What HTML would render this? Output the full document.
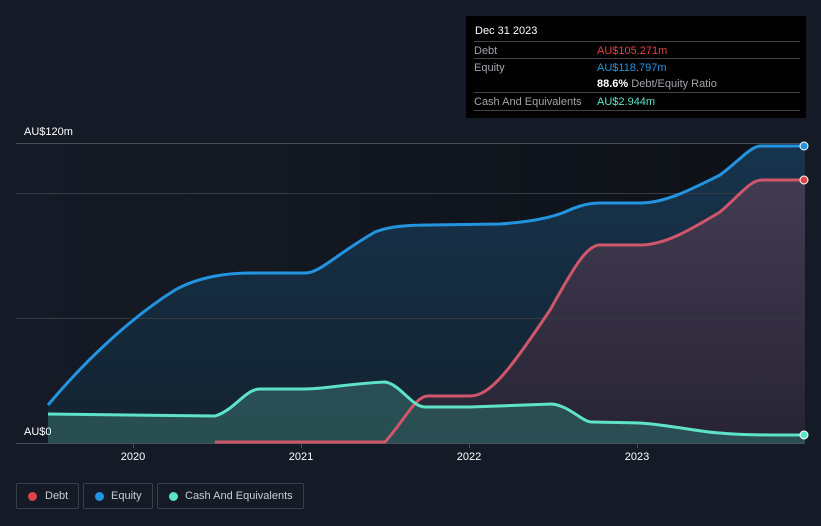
<!DOCTYPE html>
<html><head><meta charset="utf-8"><style>
body{margin:0;width:821px;height:526px;overflow:hidden;background:#151b26;font-family:"Liberation Sans",sans-serif;}
.tt{position:absolute;left:466px;top:16px;width:340px;height:102px;background:#000;color:#fff;font-size:11px;}
.tt .r{position:absolute;left:8px;width:326px;border-top:1px solid #444;height:17px;}
.tt span{position:absolute;top:3px;}
.lg{position:absolute;top:483px;height:26px;border:1px solid #3a3f48;border-radius:2px;color:#c9ccd1;font-size:11px;box-sizing:border-box;}
.lg i{position:absolute;left:11px;top:8px;width:9px;height:9px;border-radius:50%;}
.lg b{font-weight:normal;position:absolute;left:28px;top:6px;white-space:nowrap;}
</style></head><body>
<svg width="821" height="526" style="position:absolute;left:0;top:0">
<defs>
<linearGradient id="bg" x1="0" x2="1" y1="0" y2="0"><stop offset="0" stop-color="#151b26"/><stop offset="1" stop-color="#0e1117"/></linearGradient>
<linearGradient id="eq" x1="0" x2="0" y1="0" y2="1"><stop offset="0" stop-color="#16344d"/><stop offset="1" stop-color="#14222f"/></linearGradient>
<linearGradient id="db" x1="0" x2="0" y1="0" y2="1"><stop offset="0" stop-color="#433b52"/><stop offset="1" stop-color="#262433"/></linearGradient>
</defs>
<rect x="0" y="0" width="821" height="526" fill="#151b26"/>
<rect x="16" y="143" width="789" height="300" fill="url(#bg)"/>
<path d="M48,405 C90,355 135,315 175,290 C200,276 230,273 250,273 L305,273 C320,273 335,255 375,232 C390,226 410,225 430,225 L500,224 C530,222 550,218 565,212 C580,205 590,203 600,203 L640,203 C665,203 690,190 720,175 C740,160 750,147 760,146 L805,146 L805,443 L48,443Z" fill="url(#eq)"/>
<path d="M215,442 L385,442 C405,420 415,396 428,396 L470,396 C490,396 510,370 550,310 C570,275 585,245 600,245 L640,245 C665,245 690,230 720,212 C740,195 750,180 762,180 L805,180 L805,443 L215,443Z" fill="url(#db)"/>
<path d="M48,414 L215,416 C235,410 245,389 260,389 L305,389 C325,389 345,384 385,382 C400,384 412,407 425,407 L470,407 L552,404 C570,406 582,422 592,422 L640,423 C670,425 700,432 720,433 C740,435 760,435 805,435 L805,443 L48,443Z" fill="#2b5357" opacity="0.9"/>
<line x1="16" y1="143.5" x2="805" y2="143.5" stroke="#4a4f58"/>
<line x1="16" y1="193.5" x2="805" y2="193.5" stroke="#353a44"/>
<line x1="16" y1="318.5" x2="805" y2="318.5" stroke="#353a44"/>
<line x1="16" y1="443.5" x2="805" y2="443.5" stroke="#4a4f58"/>
<g stroke="#4a4f58"><line x1="133.5" y1="443" x2="133.5" y2="448"/><line x1="301.5" y1="443" x2="301.5" y2="448"/><line x1="469.5" y1="443" x2="469.5" y2="448"/><line x1="637.5" y1="443" x2="637.5" y2="448"/></g>
<path d="M48,405 C90,355 135,315 175,290 C200,276 230,273 250,273 L305,273 C320,273 335,255 375,232 C390,226 410,225 430,225 L500,224 C530,222 550,218 565,212 C580,205 590,203 600,203 L640,203 C665,203 690,190 720,175 C740,160 750,147 760,146 L805,146" fill="none" stroke="#2394e0" stroke-width="3"/>
<path d="M215,442 L385,442 C405,420 415,396 428,396 L470,396 C490,396 510,370 550,310 C570,275 585,245 600,245 L640,245 C665,245 690,230 720,212 C740,195 750,180 762,180 L805,180" fill="none" stroke="#d0566a" stroke-width="3"/>
<path d="M48,414 L215,416 C235,410 245,389 260,389 L305,389 C325,389 345,384 385,382 C400,384 412,407 425,407 L470,407 L552,404 C570,406 582,422 592,422 L640,423 C670,425 700,432 720,433 C740,435 760,435 805,435" fill="none" stroke="#5ee3c8" stroke-width="3"/>
<circle cx="804" cy="146" r="4" fill="#2394e0" stroke="#fff" stroke-width="1"/>
<circle cx="804" cy="180" r="4" fill="#e04444" stroke="#fff" stroke-width="1"/>
<circle cx="804" cy="435" r="4" fill="#5ee3c8" stroke="#fff" stroke-width="1"/>
<g fill="#fff" font-family="Liberation Sans, sans-serif" font-size="11">
<text x="24" y="135">AU$120m</text><text x="24" y="435">AU$0</text>
<text x="133" y="460" text-anchor="middle">2020</text><text x="301" y="460" text-anchor="middle">2021</text>
<text x="469" y="460" text-anchor="middle">2022</text><text x="637" y="460" text-anchor="middle">2023</text>
</g>
</svg>
<div class="tt">
<span style="left:9px;top:9px">Dec 31 2023</span>
<div class="r" style="top:25px"><span style="left:0;color:#a0a4aa">Debt</span><span style="left:123px;color:#e04444">AU$105.271m</span></div>
<div class="r" style="top:42px"><span style="left:0;color:#a0a4aa">Equity</span><span style="left:123px;color:#2394e0">AU$118.797m</span></div>
<div style="position:absolute;left:131px;top:62px"><b style="font-weight:bold">88.6%</b> <span style="position:static;color:#a0a4aa">Debt/Equity Ratio</span></div>
<div class="r" style="top:76px"><span style="left:0;color:#a0a4aa">Cash And Equivalents</span><span style="left:123px;color:#5ee3c8">AU$2.944m</span></div>
<div class="r" style="top:94px;height:0"></div>
</div>
<div class="lg" style="left:16px;width:63px"><i style="background:#e04444"></i><b style="left:28px">Debt</b></div>
<div class="lg" style="left:83px;width:70px"><i style="background:#2394e0"></i><b style="left:27px">Equity</b></div>
<div class="lg" style="left:157px;width:147px"><i style="background:#5ee3c8"></i><b style="left:27px">Cash And Equivalents</b></div>
</body></html>
